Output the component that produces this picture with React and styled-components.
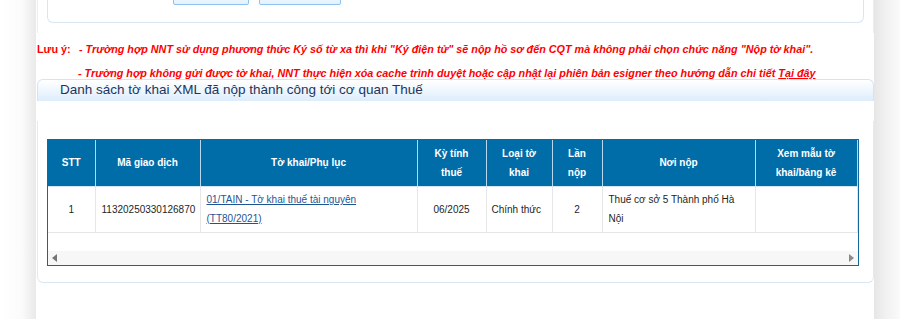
import React from "react";
import styled, { createGlobalStyle } from "styled-components";

const GlobalStyle = createGlobalStyle`
  body {
    margin: 0;
    background: #ffffff;
    font-family: "Liberation Sans", Arial, sans-serif;
  }
`;

const Page = styled.div`
  display: flex;
  width: 900px;
  height: 319px;
  overflow: hidden;
`;

const Shade = styled.div`
  flex: none;
  width: ${(p) => p.w}px;
  background: ${(p) =>
    p.side === "left"
      ? "linear-gradient(to right, #ffffff 0%, #fbfbfb 60%, #e9e9e9 100%)"
      : "linear-gradient(to right, #e6e6e6 0%, #f1f1f1 45%, #fafafa 100%)"};
`;

const Main = styled.div`
  flex: none;
  width: 838px;
  padding-left: 1px;
  box-sizing: border-box;
  background: #ffffff;
  display: flex;
  flex-direction: column;
`;

const TopBlock = styled.div`
  height: 33px;
  box-sizing: border-box;
  border-left: 1px solid #e6eef6;
  border-right: 1px solid #e6eef6;
  padding: 0 9px;
`;

const TopPanel = styled.div`
  height: 23px;
  box-sizing: border-box;
  border: 1px solid #d9e6f2;
  border-top: none;
  border-radius: 0 0 6px 6px;
  display: flex;
  gap: 10px;
  padding-left: 125px;
`;

const ToolButton = styled.button`
  width: ${(p) => p.w}px;
  height: 22px;
  margin-top: -17px;
  border: 1px solid #8cc3f2;
  border-radius: 2px;
  background: linear-gradient(#ffffff, #e4f1fd);
  font-family: "Liberation Sans", Arial, sans-serif;
  font-size: 11px;
  color: #222;
  padding: 0;
`;

const NoteBlock = styled.div`
  height: 46px;
  box-sizing: border-box;
  padding-top: 4px;
  display: grid;
  grid-template-columns: 42px 1fr;
  color: #ff0000;
  font-size: 10.8px;
  line-height: 24px;
`;

const NoteLabel = styled.div`
  font-weight: bold;
`;

const NoteLine = styled.div`
  font-weight: bold;
  font-style: italic;
  white-space: nowrap;
  margin-left: ${(p) => p.shift || 0}px;

  a {
    color: #ff0000;
    text-decoration: underline;
  }
`;

const SectionHeader = styled.div`
  height: 22px;
  box-sizing: border-box;
  border: 1px solid #d2e4f5;
  border-bottom: none;
  border-radius: 6px 6px 0 0;
  background: linear-gradient(#ffffff 0%, #f4f9fe 35%, #dcedfb 100%);
  padding-left: 22px;
  font-size: 13.5px;
  line-height: 20px;
  color: #1c365e;
`;

const Spacer = styled.div`
  height: 20px;
`;

const SectionBody = styled.div`
  border: 1px solid #e6e9ee;
  border-top: none;
  border-bottom-color: #d8e6f4;
  border-radius: 0 0 6px 6px;
  padding: 18px 14px 16px 9px;
`;

const TableFrame = styled.div`
  border: 1px solid #13679c;
`;

const TableScroll = styled.div`
  height: 111px;
  overflow: hidden;
`;

const Table = styled.table`
  width: 809px;
  table-layout: fixed;
  border-collapse: collapse;
  font-size: 10px;
  line-height: 19px;
`;

const HeadCell = styled.th`
  height: 46px;
  box-sizing: border-box;
  padding: 0 4px;
  background: #006ca8;
  color: #ffffff;
  font-weight: bold;
  text-align: center;
  vertical-align: middle;
  border-right: 1px solid #b9d8ee;
  border-bottom: 1px solid #d5e6f2;
`;

const Cell = styled.td`
  height: 46px;
  box-sizing: border-box;
  padding: 0 6px 0 ${(p) => p.pl || 6}px;
  color: #1e1e1e;
  text-align: ${(p) => p.align || "left"};
  vertical-align: middle;
  border-right: 1px solid #e6e6e6;
  border-bottom: 1px solid #e6e6e6;

  a {
    color: #1f5494;
    text-decoration: underline;
  }
`;

const ScrollTrack = styled.div`
  height: 14px;
  background: #f7f7f7;
  display: flex;
  align-items: center;
  justify-content: space-between;
  padding: 0 4px;
`;

const Arrow = styled.span`
  width: 0;
  height: 0;
  border-top: 4px solid transparent;
  border-bottom: 4px solid transparent;
  ${(p) =>
    p.dir === "left"
      ? "border-right: 5px solid #767676;"
      : "border-left: 5px solid #8a8a8a;"}
`;

const columns = [
  { w: 47, title: "STT" },
  { w: 105, title: "Mã giao dịch" },
  { w: 217, title: "Tờ khai/Phụ lục" },
  { w: 69, title: ["Kỳ tính", "thuế"] },
  { w: 66, title: ["Loại tờ", "khai"] },
  { w: 50, title: ["Lần", "nộp"] },
  { w: 153, title: "Nơi nộp" },
  { w: 102, title: ["Xem mẫu tờ", "khai/bảng kê"] },
];

function HeadTitle({ title }) {
  if (!Array.isArray(title)) return title;
  return (
    <>
      {title[0]}
      <br />
      {title[1]}
    </>
  );
}

export default function App() {
  return (
    <>
      <GlobalStyle />
      <Page>
        <Shade side="left" w={36} />
        <Main>
          <TopBlock>
            <TopPanel>
              <ToolButton w={76}>Tìm kiếm</ToolButton>
              <ToolButton w={82}>Nhập lại</ToolButton>
            </TopPanel>
          </TopBlock>

          <NoteBlock>
            <NoteLabel>Lưu ý:</NoteLabel>
            <div>
              <NoteLine>
                - Trường hợp NNT sử dụng phương thức Ký số từ xa thì khi "Ký điện tử" sẽ
                nộp hồ sơ đến CQT mà không phải chọn chức năng "Nộp tờ khai".
              </NoteLine>
              <NoteLine shift={-1}>
                - Trường hợp không gửi được tờ khai, NNT thực hiện xóa cache trình duyệt
                hoặc cập nhật lại phiên bản esigner theo hướng dẫn chi tiết{" "}
                <a href="#">Tại đây</a>
              </NoteLine>
            </div>
          </NoteBlock>

          <SectionHeader>Danh sách tờ khai XML đã nộp thành công tới cơ quan Thuế</SectionHeader>
          <Spacer />
          <SectionBody>
            <TableFrame>
              <TableScroll>
                <Table>
                  <colgroup>
                    {columns.map((c, i) => (
                      <col key={i} style={{ width: c.w }} />
                    ))}
                  </colgroup>
                  <thead>
                    <tr>
                      {columns.map((c, i) => (
                        <HeadCell key={i}>
                          <HeadTitle title={c.title} />
                        </HeadCell>
                      ))}
                    </tr>
                  </thead>
                  <tbody>
                    <tr>
                      <Cell align="center">1</Cell>
                      <Cell align="center">11320250330126870</Cell>
                      <Cell>
                        <a href="#">
                          01/TAIN - Tờ khai thuế tài nguyên
                          <br />
                          (TT80/2021)
                        </a>
                      </Cell>
                      <Cell align="center">06/2025</Cell>
                      <Cell pl={5}>Chính thức</Cell>
                      <Cell align="center">2</Cell>
                      <Cell>Thuế cơ sở 5 Thành phố Hà Nội</Cell>
                      <Cell />
                    </tr>
                  </tbody>
                </Table>
              </TableScroll>
              <ScrollTrack>
                <Arrow dir="left" />
                <Arrow dir="right" />
              </ScrollTrack>
            </TableFrame>
          </SectionBody>
        </Main>
        <Shade side="right" w={26} />
      </Page>
    </>
  );
}
